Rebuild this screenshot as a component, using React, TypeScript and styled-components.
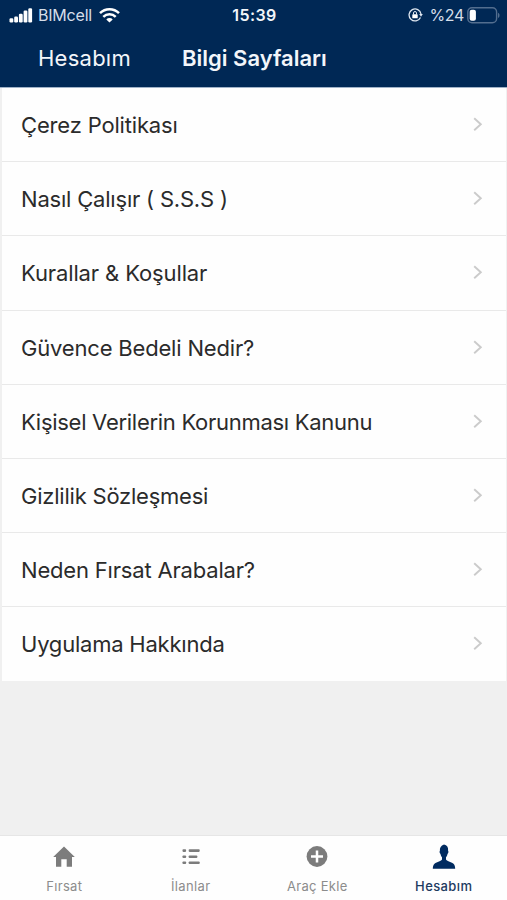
import React from "react";
import styled, { createGlobalStyle } from "styled-components";

const GlobalStyle = createGlobalStyle`
  * { box-sizing: border-box; }
  html, body { margin: 0; padding: 0; background: #f0f0f0; }
  body { font-family: Inter, "Liberation Sans", sans-serif; }
`;

const Screen = styled.div`
  width: 507px;
  height: 900px;
  display: flex;
  flex-direction: column;
  background: #f0f0f0;
  overflow: hidden;
`;

const Header = styled.header`
  height: 88px;
  flex: none;
  background: #002855;
  color: #f3f6fa;
  border-bottom: 1px solid #9fb2c8;
`;

const StatusBar = styled.div`
  height: 30px;
  display: grid;
  grid-template-columns: 1fr auto 1fr;
  align-items: center;
  padding: 0 7px 0 9px;
  font-size: 16px;
`;

const StatusGroup = styled.div<{ $end?: boolean }>`
  display: flex;
  align-items: center;
  justify-content: ${(p) => (p.$end ? "flex-end" : "flex-start")};
`;

const Carrier = styled.span`
  margin: 0 7px 0 5px;
  letter-spacing: -0.2px;
  color: #d5dee9;
`;

const Clock = styled.span`
  font-weight: 600;
  letter-spacing: 0.4px;
`;

const Percent = styled.span`
  margin: 0 3px 0 6px;
  letter-spacing: -0.35px;
  color: #d5dee9;
`;

const NavBar = styled.nav`
  height: 55px;
  display: flex;
  align-items: center;
  padding-left: 38px;
  font-size: 22px;
  line-height: 28px;
`;

const BackLink = styled.span`
  width: 144px;
  letter-spacing: 0.25px;
`;

const Title = styled.h1`
  margin: 0;
  font-size: 22px;
  font-weight: 600;
  letter-spacing: 0;
`;

const List = styled.ul`
  list-style: none;
  margin: 0 1px 0 2px;
  padding: 0;
  flex: none;
  background: #fefefe;
`;

const Row = styled.li`
  height: 74.2px;
  display: flex;
  align-items: center;
  justify-content: space-between;
  padding: 0 23px 0 19px;
  border-bottom: 1.5px solid #e9e9e9;
  &:last-child { border-bottom-color: #f0f0f0; }
`;

const RowLabel = styled.span<{ $spacing: number }>`
  padding-top: 1px;
  font-size: 22px;
  line-height: 28px;
  color: #2b2b2b;
  white-space: pre;
  letter-spacing: ${(p) => p.$spacing}px;
`;

const Spacer = styled.div`
  flex: 1;
`;

const TabBar = styled.footer`
  height: 65px;
  flex: none;
  display: grid;
  grid-template-columns: repeat(4, 1fr);
  padding-left: 1px;
  background: #fefefe;
  border-top: 1px solid #e6e6e6;
`;

const Tab = styled.div<{ $active?: boolean }>`
  display: flex;
  flex-direction: column;
  align-items: center;
  padding-top: 8px;
  color: ${(p) => (p.$active ? "#002b60" : "#7c7c7c")};
  svg { display: block; }
`;

const TabLabel = styled.span<{ $active?: boolean; $spacing: number }>`
  margin-top: 8px;
  font-size: 13px;
  line-height: 16px;
  font-weight: ${(p) => (p.$active ? 500 : 400)};
  letter-spacing: ${(p) => p.$spacing}px;
  color: ${(p) => (p.$active ? "#1d3a5f" : "#8c8c8c")};
`;

const SignalIcon = () => (
  <svg width="24" height="15" viewBox="0 0 24 15" fill="#fff">
    <rect x="0.5" y="10.2" width="3.8" height="4.3" rx="1.2" />
    <rect x="5.2" y="8.6" width="3.8" height="5.9" rx="1.2" />
    <rect x="9.9" y="5.8" width="3.8" height="8.7" rx="1.2" />
    <rect x="14.6" y="2.6" width="3.8" height="11.9" rx="1.2" />
    <rect x="19.3" y="0.2" width="3.8" height="14.3" rx="1.2" />
  </svg>
);

const WifiIcon = () => (
  <svg width="21" height="15" viewBox="0 0 21 15" fill="none" stroke="#fff" strokeWidth="2.5">
    <path d="M1 5.2a13.4 13.4 0 0 1 19 0" />
    <path d="M4.3 8.9a8.8 8.8 0 0 1 12.4 0" />
    <path d="M10.5 14.6l-3.2-3.2a4.6 4.6 0 0 1 6.4 0z" fill="#fff" stroke="none" />
  </svg>
);

const LockRotationIcon = () => (
  <svg width="15" height="14" viewBox="0 0 15 14" fill="none" stroke="#dfe7f0" strokeWidth="1.3">
    <path d="M12.5 9.5A6 6 0 1 1 13 6" />
    <path d="M11.2 6h3.6L13 8.8z" fill="#dfe7f0" stroke="none" />
    <rect x="4.3" y="6.3" width="5.4" height="4" rx="0.6" fill="#fff" stroke="none" />
    <path d="M5.5 6.5V5a1.5 1.5 0 0 1 3 0v1.5" strokeWidth="1" />
  </svg>
);

const BatteryIcon = () => (
  <svg width="33" height="17" viewBox="0 0 33 17">
    <rect x="0.8" y="0.8" width="28.8" height="15" rx="4.2" fill="none" stroke="#536e8f" strokeWidth="1.4" />
    <rect x="2.7" y="2.8" width="6.2" height="11" rx="2" fill="#fff" />
    <path d="M31 5.7c2 .9 2 4.3 0 5.2z" fill="#536e8f" />
  </svg>
);

const Chevron = () => (
  <svg width="10" height="15" viewBox="0 0 10 15" fill="none" stroke="#cbcbcb" strokeWidth="1.9">
    <path d="M1.2 1.3L7.8 7.3L1.2 13.3" />
  </svg>
);

const HomeIcon = () => (
  <svg width="24" height="26" viewBox="0 0 24 26" fill="currentColor">
    <path d="M12 2.6L22.8 13H20V22.7H14.7V15.2H9.3V22.7H4V13H1.2Z" />
  </svg>
);

const ListIcon = () => (
  <svg width="24" height="26" viewBox="0 0 24 26" fill="currentColor">
    <rect x="3.5" y="5.3" width="3.6" height="2.6" rx="0.8" />
    <rect x="9.7" y="5.3" width="11" height="2.6" rx="0.8" />
    <rect x="3.5" y="11.4" width="3.6" height="2.6" rx="0.8" />
    <rect x="9.7" y="11.4" width="8.6" height="2.6" rx="0.8" />
    <rect x="3.5" y="17.5" width="3.6" height="2.6" rx="0.8" />
    <rect x="9.7" y="17.5" width="11" height="2.6" rx="0.8" />
  </svg>
);

const AddIcon = () => (
  <svg width="24" height="26" viewBox="0 0 24 26">
    <circle cx="12" cy="12.5" r="10.4" fill="currentColor" />
    <path d="M12 6.5v12M6 12.5h12" stroke="#fff" strokeWidth="2.5" />
  </svg>
);

const PersonIcon = () => (
  <svg width="24" height="26" viewBox="0 0 24 26" fill="currentColor">
    <path d="M12 0.6c3.1 0.5 4.4 2.9 4.1 6.1c0.7 0.9 0.2 2.6-0.6 3.3c-0.2 1.6-1 2.6-1.5 3.3v2.2c0.5 1.6 5 2.6 7.5 4.2c1.3 0.9 1.6 3.2 1.7 5H0.8c0.1-1.8 0.4-4.1 1.7-5c2.5-1.6 7-2.6 7.5-4.2v-2.2c-0.5-0.7-1.3-1.7-1.5-3.3c-0.8-0.7-1.3-2.4-0.6-3.3C7.6 4 8.9 1.6 12 0.6z" />
  </svg>
);

const pages = [
  { label: "Çerez Politikası", spacing: -0.17 },
  { label: "Nasıl Çalışır ( S.S.S )", spacing: -0.2 },
  { label: "Kurallar & Koşullar", spacing: -0.12 },
  { label: "Güvence Bedeli Nedir?", spacing: -0.18 },
  { label: "Kişisel Verilerin Korunması Kanunu", spacing: -0.28 },
  { label: "Gizlilik Sözleşmesi", spacing: -0.22 },
  { label: "Neden Fırsat Arabalar?", spacing: -0.18 },
  { label: "Uygulama Hakkında", spacing: -0.22 },
];

const tabs = [
  { label: "Fırsat", Icon: HomeIcon, spacing: 0.35 },
  { label: "İlanlar", Icon: ListIcon, spacing: 0.35 },
  { label: "Araç Ekle", Icon: AddIcon, spacing: 0.3 },
  { label: "Hesabım", Icon: PersonIcon, spacing: 0.4, active: true },
];

export default function App() {
  return (
    <Screen>
      <GlobalStyle />
      <Header>
        <StatusBar>
          <StatusGroup>
            <SignalIcon />
            <Carrier>BIMcell</Carrier>
            <WifiIcon />
          </StatusGroup>
          <Clock>15:39</Clock>
          <StatusGroup $end>
            <LockRotationIcon />
            <Percent>%24</Percent>
            <BatteryIcon />
          </StatusGroup>
        </StatusBar>
        <NavBar>
          <BackLink>Hesabım</BackLink>
          <Title>Bilgi Sayfaları</Title>
        </NavBar>
      </Header>
      <List>
        {pages.map(({ label, spacing }) => (
          <Row key={label}>
            <RowLabel $spacing={spacing}>{label}</RowLabel>
            <Chevron />
          </Row>
        ))}
      </List>
      <Spacer />
      <TabBar>
        {tabs.map(({ label, Icon, spacing, active }) => (
          <Tab key={label} $active={active}>
            <Icon />
            <TabLabel $active={active} $spacing={spacing}>{label}</TabLabel>
          </Tab>
        ))}
      </TabBar>
    </Screen>
  );
}
